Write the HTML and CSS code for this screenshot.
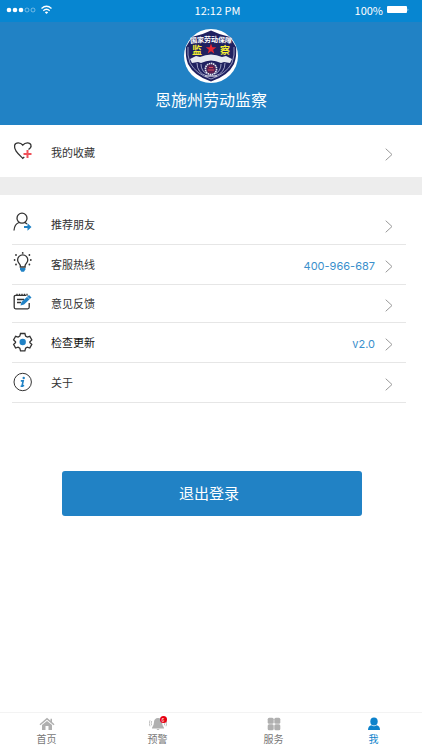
FILE: index.html
```
<!DOCTYPE html>
<html lang="zh-CN">
<head>
    <meta charset="UTF-8">
    <meta name="viewport" content="width=device-width, initial-scale=1.0">
    <title>恩施州劳动监察</title>
    <link rel="stylesheet" href="styles.css">
</head>
<body>
    <div class="status-bar">
        <div class="signal">
            <svg width="46" height="12" viewBox="0 0 46 12" fill="none" stroke="#fff">
                <g fill="#fff" stroke="none"><circle cx="3" cy="6" r="2.3"/><circle cx="9" cy="6" r="2.3"/><circle cx="15" cy="6" r="2.3"/></g>
                <g stroke-width=".6" opacity=".7"><circle cx="21" cy="6" r="2"/><circle cx="27" cy="6" r="2"/></g>
                <path d="M35.500 4.500q5-4.400 10 0M37.300 6.700q3.200-2.800 6.400 0" stroke-width="1.300"/>
                <path d="M38.800 8.300q1.700-1.400 3.400 0L40.500 10z" fill="#fff" stroke="none"/>
            </svg>
        </div>
        <div class="time">12:12 PM</div>
        <div class="battery">
            <span>100%</span>
            <svg width="22" height="8" viewBox="0 0 22 8" fill="#fff"><rect width="20" height="7" rx="1"/><path d="M20.700 2.200q1.300 1.500 0 3z"/></svg>
        </div>
    </div>

    <header class="header">
        <svg class="emblem" viewBox="0 0 54 54">
            <circle cx="27" cy="27" r="27" fill="#fff"/>
            <path d="M8 8Q18 6 27 1.500Q36 6 46 8Q49 13 52 18Q53 27 50 35Q44 47 27 52.500Q10 47 4 35Q1 27 2 18Q5 13 8 8Z" fill="#202160"/>
            <path d="M4 18Q3 26 6 34Q12 45 27 50Q42 45 48 34Q51 26 50 18" fill="none" stroke="#c9cbe6" stroke-width=".7"/>
            <g class="emblem-arc">
                <text x="6" y="14" transform="rotate(-8 10 11)">国</text>
                <text x="13" y="13.500" transform="rotate(-4 17 10)">家</text>
                <text x="20" y="13">劳</text>
                <text x="27" y="13">动</text>
                <text x="34" y="13.500" transform="rotate(4 37 10)">保</text>
                <text x="41" y="14" transform="rotate(8 44 11)">障</text>
            </g>
            <text class="emblem-word" x="8" y="25">监</text>
            <text class="emblem-word" x="36" y="25">察</text>
            <path d="M27 14.500l1.300 3.700 4 .1-3.200 2.400 1.200 3.800L27 22.200l-3.300 2.300 1.200-3.800-3.200-2.400 4-.1z" fill="#e62532"/>
            <path d="M6 30l6-3 4 1q11-5 22 0l4-1 6 3-2 4-6-1-3 1q-10-5-20 0l-3-1-6 1z" fill="#e7e9f1"/>
            <path d="M13 34q0 10 10 13M41 34q0 10-10 13M17 35q0 7 6 10M37 35q0 7-6 10" fill="none" stroke="#bfc1de" stroke-width=".8"/>
            <circle cx="27" cy="40" r="5.500" fill="none" stroke="#e6e6ee" stroke-width="1.800" stroke-dasharray="1.500 .6"/>
            <circle cx="27" cy="40" r="4.500" fill="#5c2050"/>
            <path d="M24 41h6M25 38.500h4" stroke="#d8485a"/>
            <path d="M21 47h12" stroke="#e6e6ee" stroke-width="1.200"/>
        </svg>
        <h1>恩施州劳动监察</h1>
    </header>

    <main>
        <ul class="list favorites">
            <li>
                <a class="row" href="#">
                    <svg class="icon" viewBox="0 0 22 22">
                        <path d="M16.500 9.500q3.200-2.300 2.500-4.300c-1-3.300-5.800-3.100-8.200 0C8.400 2 3.600 2.200 2.600 5.200 1.700 9.800 6 13.500 10.700 18.300l1.600-1.300"/>
                        <path class="red" d="M15.500 10v8M11.500 14h8"/>
                    </svg>
                    <span class="label">我的收藏</span>
                    <svg class="arrow" viewBox="0 0 8 13"><path d="M.7.7l6.300 5.800-6.300 5.800"/></svg>
                </a>
            </li>
        </ul>

        <ul class="list settings">
            <li>
                <a class="row" href="#">
                    <svg class="icon" viewBox="0 0 22 22">
                        <circle cx="10" cy="6.200" r="5"/>
                        <path d="M7 10.500Q2.500 12 2 18.500M13 10.500l2 1.500"/>
                        <path class="blue-fill" d="M12 14h3.500v-2.700l4 3.700-4 3.700v-2.700H12z"/>
                    </svg>
                    <span class="label">推荐朋友</span>
                    <svg class="arrow" viewBox="0 0 8 13"><path d="M.7.7l6.300 5.800-6.300 5.800"/></svg>
                </a>
            </li>
            <li>
                <a class="row" href="tel:400966687">
                    <svg class="icon" viewBox="0 0 22 22">
                        <path d="M8.300 15v-1.500C7.700 11.500 5.600 10.600 5.600 8a5.100 5.100 0 0 1 10.200 0c0 2.600-2.100 3.500-2.700 5.500V15z"/>
                        <path class="blue-fill" d="M8 16h5.400v1.600l-1.400 2.200H9.400L8 17.600z"/>
                        <g class="dots"><circle cx="10.700" cy=".9" r=".9"/><circle cx="4" cy="3" r=".9"/><circle cx="17.400" cy="3" r=".9"/><circle cx="2.600" cy="8" r=".9"/><circle cx="18.800" cy="8" r=".9"/><circle cx="4" cy="12.500" r=".9"/><circle cx="17.400" cy="12.500" r=".9"/></g>
                    </svg>
                    <span class="label">客服热线</span>
                    <span class="value">400-966-687</span>
                    <svg class="arrow" viewBox="0 0 8 13"><path d="M.7.7l6.300 5.800-6.300 5.800"/></svg>
                </a>
            </li>
            <li>
                <a class="row compact" href="#">
                    <svg class="icon" viewBox="0 0 22 22">
                        <path d="M14 4.300H3.700Q2.200 4.300 2.200 5.800v10.500q0 1.500 1.500 1.500h12q1.500 0 1.500-1.500V12M5 8.500h7M5 11.500h4"/>
                        <path d="M5 2.700v2M7.500 2.700v2M10 2.700v2M12.500 2.700v2M15 2.700v2"/>
                        <path class="blue-fill" d="M8.500 14.500l1-3.500 7.500-7 2.500 2.500-7.500 7z"/>
                        <path class="cut" d="M15 5.500l3 3"/>
                    </svg>
                    <span class="label">意见反馈</span>
                    <svg class="arrow" viewBox="0 0 8 13"><path d="M.7.7l6.300 5.800-6.300 5.800"/></svg>
                </a>
            </li>
            <li>
                <a class="row" href="#">
                    <svg class="icon" viewBox="0 0 22 22">
                        <path d="M8.500 3.500h4.400l.7 2.600 1.700 1 2.500-.8 2 3.600-1.900 1.800v.9l1.900 1.800-2 3.600-2.500-.8-1.700 1-.7 2.600H8.500l-.7-2.600-1.700-1-2.500.8-2-3.600 1.900-1.800v-.9L1.600 9.900l2-3.600 2.500.8 1.700-1z"/>
                        <circle class="blue-fill" cx="10.700" cy="12" r="3.200"/>
                    </svg>
                    <span class="label strong">检查更新</span>
                    <span class="value">v2.0</span>
                    <svg class="arrow" viewBox="0 0 8 13"><path d="M.7.7l6.300 5.800-6.300 5.800"/></svg>
                </a>
            </li>
            <li>
                <a class="row" href="#">
                    <svg class="icon" viewBox="0 0 22 22">
                        <circle class="thin" cx="10.700" cy="12" r="8.700"/>
                        <circle class="blue-fill" cx="11.700" cy="8" r="1.200"/>
                        <path class="blue" d="M8.800 10.900h2.400l-1.100 4.700q0 .9 2-.2M8.600 16.200h2.600"/>
                    </svg>
                    <span class="label">关于</span>
                    <svg class="arrow" viewBox="0 0 8 13"><path d="M.7.7l6.300 5.800-6.300 5.800"/></svg>
                </a>
            </li>
        </ul>

        <div class="actions">
            <button type="button" class="logout">退出登录</button>
        </div>
    </main>

    <nav class="tabs">
        <a class="tab" href="#">
            <svg width="16" height="14" viewBox="0 0 16 14" fill="#b0b0b0"><path d="M8 .8L.5 7.300l.9.9L8 2.700l6.600 5.500.9-.9-2.500-2.200V1.700h-1.500v2z"/><path d="M8 3.900l-5 4.200V13h3.500V9h3v4H13V8.100z"/></svg>
            <span>首页</span>
        </a>
        <a class="tab" href="#">
            <span class="bell">
                <svg width="18" height="14" viewBox="0 0 18 14" fill="#b0b0b0"><path d="M9 1q3.800.3 4 4 .1 3.800 2 5.700v.8H3v-.8Q4.900 8.800 5 5 5.200 1.300 9 1zM7.500 12h3q-1.500 2-3 0z"/><path d="M2.700 4q-1 2.200 0 4.400M15.300 4q1 2.200 0 4.400M1 3.300Q-.5 6.300 1 9.300M17 3.300q1.500 3 0 6" fill="none" stroke="#b0b0b0" stroke-width=".8"/></svg>
                <span class="badge">6</span>
            </span>
            <span>预警</span>
        </a>
        <a class="tab" href="#">
            <svg width="14" height="14" viewBox="0 0 14 14" fill="#b0b0b0"><rect x=".7" y=".7" width="6" height="6" rx="1.500"/><rect x="7.300" y=".7" width="6" height="6" rx="1.500"/><rect x=".7" y="7.300" width="6" height="6" rx="1.500"/><rect x="7.300" y="7.300" width="6" height="6" rx="1.500"/></svg>
            <span>服务</span>
        </a>
        <a class="tab active" href="#">
            <svg width="14" height="14" viewBox="0 0 14 14" fill="#0d82cb"><ellipse cx="7" cy="4.500" rx="3.700" ry="4"/><path d="M1 13q0-4 3.500-4.700Q7 10 9.500 8.300 13 9 13 13z"/></svg>
            <span>我</span>
        </a>
    </nav>
</body>
</html>
```
FILE: styles.css
```
* {
    box-sizing: border-box;
}
body {
    font-family: "Noto Sans CJK SC", sans-serif;
    font-size: 11px;
    color: #333;
    background-color: #fff;
    margin: 0;
    min-height: 100vh;
    display: flex;
    flex-direction: column;
}
a {
    color: inherit;
    text-decoration: none;
}
svg {
    display: block;
    flex-shrink: 0;
}

/* status bar */
.status-bar {
    display: grid;
    grid-template-columns: 1fr auto 1fr;
    align-items: center;
    height: 22px;
    padding: 0 13px 2px 6px;
    background-color: #0786d1;
    color: #fff;
    line-height: 20px;
}
.time {
    padding-left: 20px;
}
.battery {
    display: flex;
    justify-content: flex-end;
    align-items: center;
    gap: 4px;
}

/* header */
.header {
    display: flex;
    flex-direction: column;
    align-items: center;
    gap: 4px;
    padding: 7px 0 14px;
    background-color: #2182c5;
    color: #fff;
}
.header h1 {
    margin: 0;
    font-size: 16px;
    font-weight: 400;
    line-height: 24px;
}
.emblem {
    width: 54px;
    height: 54px;
}
.emblem-arc {
    font-size: 7px;
    font-weight: 700;
    fill: #fff;
}
.emblem-word {
    font-size: 10px;
    font-weight: 700;
    fill: #f5ee35;
}

/* lists */
.list {
    list-style: none;
    margin: 0;
    padding: 0 16px 0 12px;
}
.favorites {
    padding-top: 8px;
    padding-bottom: 4px;
    border-bottom: 18px solid #ededed;
}
.settings {
    padding-top: 10px;
}
.settings .row {
    border-bottom: 1px solid #e6e6e6;
}
.row {
    display: flex;
    align-items: center;
    height: 40px;
    padding-right: 13px;
}
.settings .compact {
    height: 38px;
}
.icon {
    width: 22px;
    height: 22px;
    margin-right: 17px;
    margin-bottom: 4px;
    fill: none;
    stroke: #333;
    stroke-width: 1.3;
}
.icon .thin {
    stroke-width: 1;
}
.icon .red {
    stroke: #f0525a;
    stroke-width: 2;
}
.icon .blue {
    stroke: #2182c5;
    stroke-width: 1.6;
}
.icon .blue-fill {
    fill: #2182c5;
    stroke: none;
}
.icon .cut {
    stroke: #fff;
    stroke-width: 0.6;
}
.icon .dots {
    fill: #333;
    stroke: none;
}
.label {
    flex: 1;
    margin-bottom: 2px;
}
.strong {
    color: #111;
}
.value {
    font-family: Inter, "Liberation Sans", sans-serif;
    color: #3a8fcc;
    margin-top: 3px;
    margin-right: 10px;
}
.arrow {
    width: 8px;
    height: 13px;
    margin-top: 3px;
    fill: none;
    stroke: #999;
}

/* logout */
.actions {
    padding: 68px 60px 20px 62px;
}
.logout {
    display: block;
    width: 100%;
    height: 45px;
    padding: 0 6px 2px 0;
    border: 0;
    border-radius: 3px;
    background-color: #2182c5;
    color: #fff;
    font-family: inherit;
    font-size: 15px;
}

/* bottom tabs */
.tabs {
    display: grid;
    grid-template-columns: 93fr 129fr 103fr 97fr;
    margin-top: auto;
    padding: 4px 0 3px;
    border-top: 1px solid #f3f3f3;
    color: #777;
    font-size: 10px;
    line-height: 16px;
}
.tab {
    display: flex;
    flex-direction: column;
    align-items: center;
}
.active {
    color: #0d82cb;
}
.bell {
    position: relative;
}
.badge {
    position: absolute;
    top: -1px;
    right: 0;
    width: 7px;
    height: 7px;
    border-radius: 50%;
    background-color: #e60012;
    color: #fff;
    font-size: 5px;
    line-height: 7px;
    text-align: center;
}
```
